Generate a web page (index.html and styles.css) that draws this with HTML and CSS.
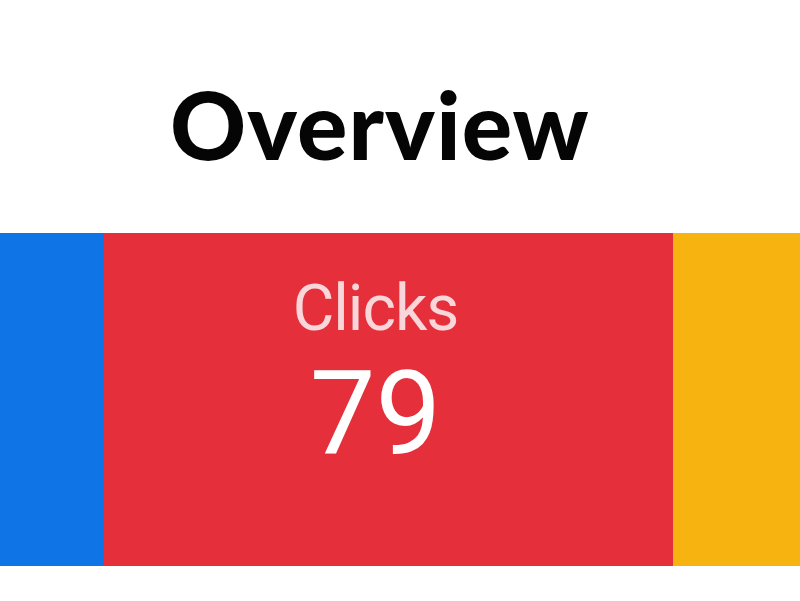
FILE: index.html
```html
<!DOCTYPE html>
<html>
<head>
<meta charset="utf-8">
<link rel="stylesheet" href="styles.css">
</head>
<body>
<div class="page">
  <header class="header">
    <h1 class="title">Overview</h1>
  </header>
  <section class="stats">
    <div class="stat stat-blue"></div>
    <div class="stat stat-red">
      <div class="stat-label">Clicks</div>
      <div class="stat-value">79</div>
    </div>
    <div class="stat stat-yellow"></div>
  </section>
</div>
</body>
</html>
```
FILE: styles.css
```css
html, body {
  margin: 0;
  padding: 0;
  background: #ffffff;
}
.page {
  width: 800px;
  height: 601px;
  overflow: hidden;
}
.header {
  height: 233px;
  display: flex;
  align-items: flex-start;
  padding-left: 170px;
  box-sizing: border-box;
}
.title {
  margin: 0;
  margin-top: 69px;
  font-family: "Lato", "DejaVu Sans", sans-serif;
  font-weight: 900;
  font-size: 94px;
  line-height: 110px;
  color: #050505;
  letter-spacing: 1.1px;
}
.stats {
  display: flex;
  height: 333px;
}
.stat-blue {
  width: 104px;
  background: #0f74e6;
}
.stat-red {
  width: 569px;
  background: #e5303c;
  display: flex;
  flex-direction: column;
  align-items: center;
  padding-right: 26px;
  box-sizing: border-box;
  font-family: "Roboto", "Liberation Sans", sans-serif;
}
.stat-yellow {
  flex: 1;
  background: #f7b30f;
}
.stat-label {
  margin-top: 36px;
  font-size: 64px;
  line-height: 80px;
  color: #f9d6d9;
  letter-spacing: -1px;
}
.stat-value {
  font-size: 117px;
  line-height: 120px;
  color: #ffffff;
  margin-top: 5px;
}
```
